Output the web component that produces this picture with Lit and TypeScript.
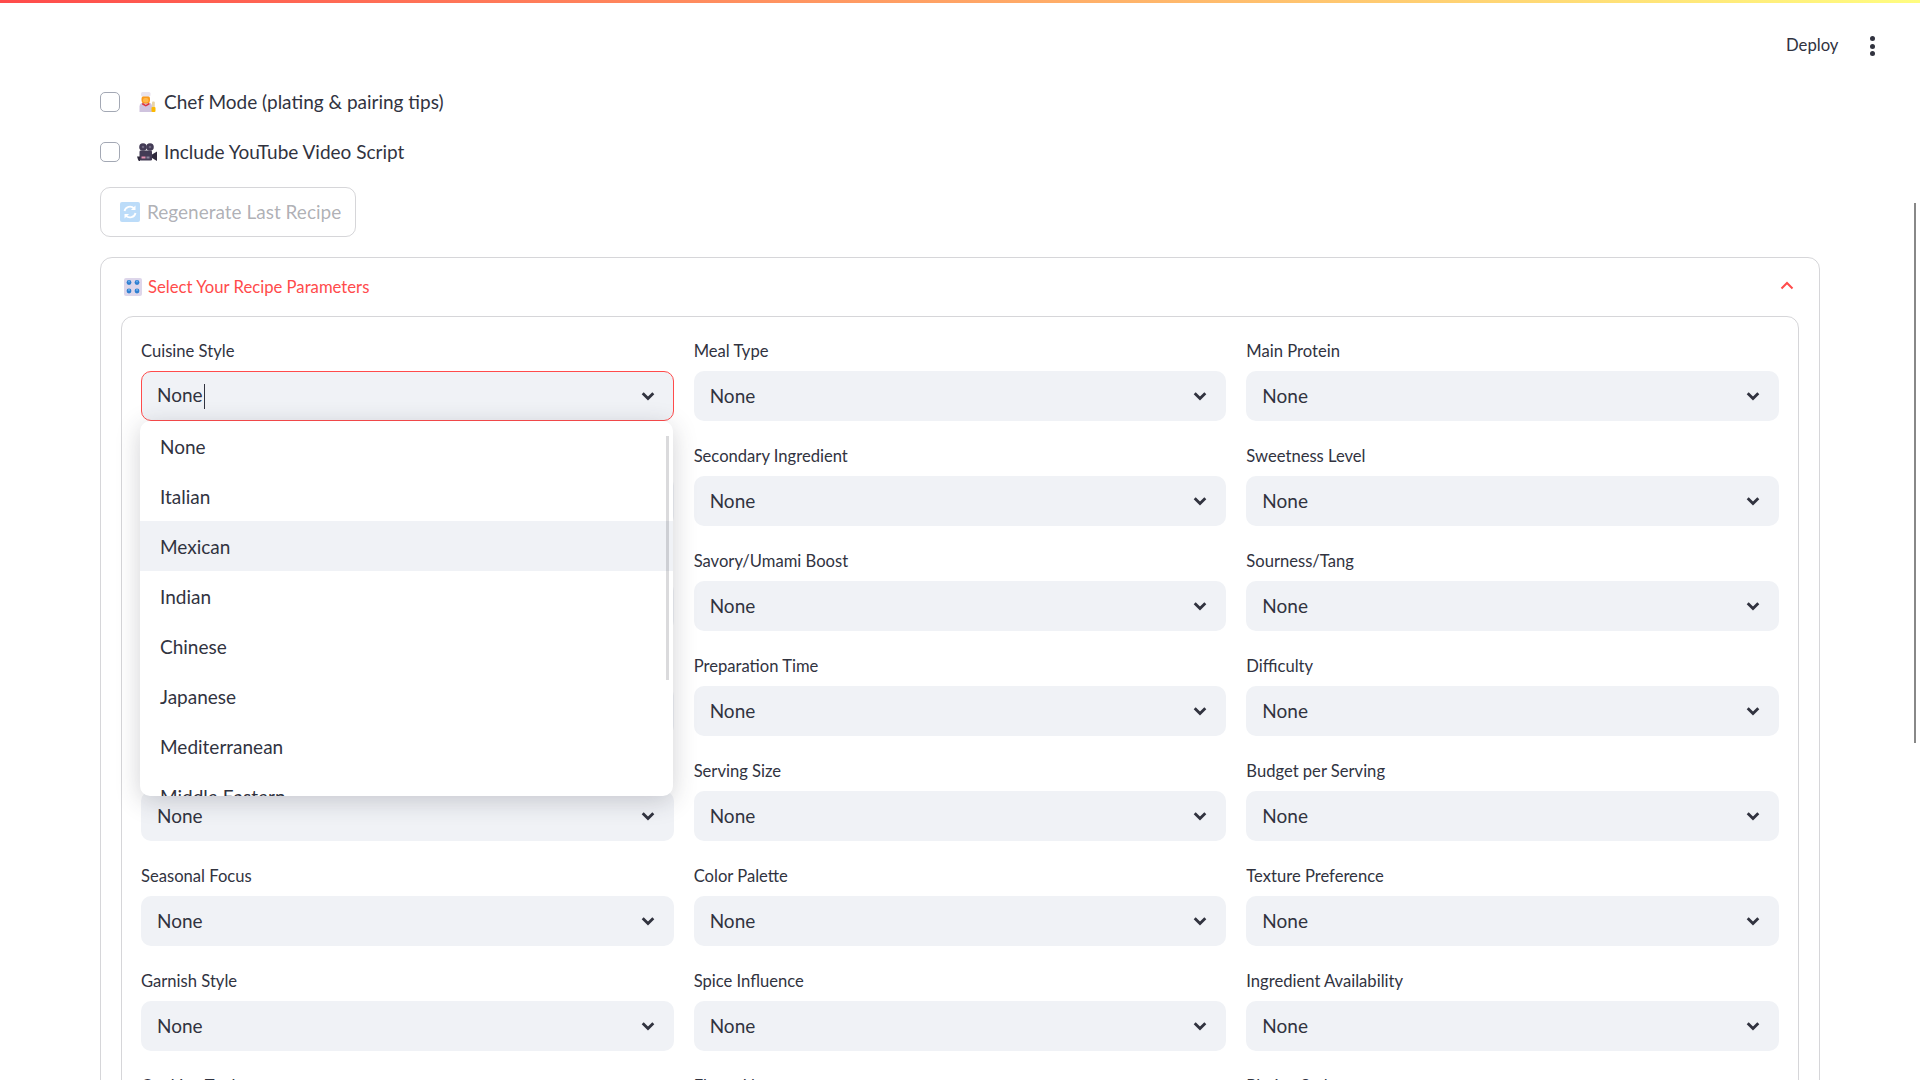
import { LitElement, html, css, svg } from 'lit';
import { customElement } from 'lit/decorators.js';

const chef = html`<svg width="20" height="20" viewBox="0 0 20 20">
  <path d="M2.500 20v-5.500C2.500 12 4.500 10.500 7 10.500h4c2.500 0 4 1.500 4 4V20z" fill="#cfc3de"/>
  <path d="M5.500 10.500L8.800 13l3.300-2.500.5 2-3.800 2-3.800-2z" fill="#e0323c"/>
  <rect x="4.500" y="3.500" width="8.500" height="8" rx="3.500" fill="#f99a1c"/>
  <rect x="6" y="6" width="5.500" height="4.500" rx="2" fill="#ffb84d"/>
  <rect x="4" y="0" width="9.500" height="4.500" rx="1.500" fill="#e9e3ee"/>
  <rect x="15" y="9.500" width="2.800" height="6" rx="1" fill="#e9d3a6"/>
  <rect x="14.500" y="15" width="4" height="5" rx="1" fill="#fcb900"/>
</svg>`;

const camera = html`<svg width="20" height="20" viewBox="0 0 20 20">
  <circle cx="6" cy="5" r="3.800" fill="#433b55"/>
  <circle cx="13" cy="5" r="3.800" fill="#433b55"/>
  <circle cx="6" cy="5" r="1.300" fill="#6f6780"/>
  <circle cx="13" cy="5" r="1.300" fill="#6f6780"/>
  <rect x="2.500" y="8.500" width="12.500" height="10" rx="1.200" fill="#433b55"/>
  <path d="M15 12.500l5-3V19l-5-3z" fill="#2f2a3d"/>
  <path d="M0 14.500h3V19H1.800L1 17.500z" fill="#2f2a3d"/>
  <rect x="4.500" y="14.500" width="4" height="2" fill="#e58fb0"/>
  <rect x="9.500" y="14.500" width="3" height="2" fill="#8c849c"/>
</svg>`;

const refresh = html`<svg width="20" height="20" viewBox="0 0 20 20" style="opacity:.4">
  <rect width="20" height="20" rx="2" fill="#5aa9f2"/>
  <path d="M4.500 9a5.600 5.600 0 0 1 9.600-2.600M15.500 11a5.600 5.600 0 0 1-9.600 2.600" fill="none" stroke="#fff" stroke-width="1.800"/>
  <path d="M15.500 3.500v4.600h-4.600zM4.500 16.500v-4.600h4.600z" fill="#fff"/>
</svg>`;

const knobs = html`<svg width="18" height="18" viewBox="0 0 18 18">
  <rect width="18" height="18" rx="2" fill="#ddd6ea"/>
  ${[[5, 4.500], [13, 4.500], [5, 13], [13, 13]].map(([x, y]) => svg`
    <circle cx=${x} cy=${y} r="2.400" fill="#2f7fd0"/>
    <circle cx=${x} cy=${y - 1} r="0.900" fill="#6db3f2"/>`)}
</svg>`;

const chevronDown = html`<svg class="chev" width="20" height="20" viewBox="0 0 20 20">
  <path d="M4.700 7.300l5.300 5.300 5.300-5.300" fill="none" stroke="#31333f" stroke-width="2.800"/>
</svg>`;

const selects = [
  ['Cuisine Style', 'Meal Type', 'Main Protein'],
  ['Vegetable Focus', 'Secondary Ingredient', 'Sweetness Level'],
  ['Cooking Method', 'Savory/Umami Boost', 'Sourness/Tang'],
  ['Dietary Restriction', 'Preparation Time', 'Difficulty'],
  ['Spice Level', 'Serving Size', 'Budget per Serving'],
  ['Seasonal Focus', 'Color Palette', 'Texture Preference'],
  ['Garnish Style', 'Spice Influence', 'Ingredient Availability'],
  ['Cooking Tools', 'Flavor Notes', 'Plating Style'],
];

const options = ['None', 'Italian', 'Mexican', 'Indian', 'Chinese', 'Japanese', 'Mediterranean', 'Middle Eastern'];

@customElement('app-root')
export class AppRoot extends LitElement {
  static styles = css`
    :host {
      display: block;
      height: 1080px;
      overflow: hidden;
      position: relative;
      background: #fff;
      color: #31333f;
      font-family: 'Lato', sans-serif;
      font-size: 19px;
    }

    .decoration {
      height: 3px;
      background: linear-gradient(90deg, #ff4b4b, #fffd80);
    }

    .toolbar {
      height: 89px;
      box-sizing: border-box;
      padding: 31px 0 0 1786px;
      display: flex;
      align-items: flex-start;
      gap: 32px;
      font-size: 16.700px;
      line-height: 22px;
    }

    .dots {
      display: flex;
      flex-direction: column;
      gap: 2.500px;
      padding-top: 2px;
    }

    .dots i {
      width: 5px;
      height: 5px;
      border-radius: 50%;
      background: #31333f;
    }

    .main {
      margin-left: 100px;
      width: 1720px;
    }

    .check {
      height: 20px;
      display: flex;
      align-items: center;
      margin-bottom: 30px;
      line-height: 18px;
    }

    .box {
      width: 20px;
      height: 20px;
      box-sizing: border-box;
      border: 1px solid #a3a8b4;
      border-radius: 5px;
      margin-right: 17px;
    }

    .check svg {
      margin-right: 7px;
    }

    .regen {
      width: 256px;
      height: 50px;
      box-sizing: border-box;
      border: 1px solid rgba(49, 51, 63, 0.2);
      border-radius: 10px;
      display: flex;
      align-items: center;
      padding: 0 0 2px 19px;
      gap: 7px;
      color: rgba(49, 51, 63, 0.4);
      margin-top: -5px;
    }

    .regen svg {
      margin-top: 2px;
    }

    .expander {
      margin-top: 20px;
      border: 1px solid rgba(49, 51, 63, 0.2);
      border-radius: 12px;
      padding: 0 20px;
    }

    .exp-head {
      height: 58px;
      box-sizing: border-box;
      padding: 0 0 1px 3px;
      display: flex;
      align-items: center;
      color: #ff4b4b;
      font-size: 16.700px;
      gap: 6px;
    }

    .exp-head .up {
      margin: 0 4px 1px auto;
    }

    .inner {
      border: 1px solid rgba(49, 51, 63, 0.2);
      border-radius: 12px;
      padding: 19px 19px 20px;
      display: grid;
      grid-template-columns: repeat(3, 1fr);
      column-gap: 20px;
      row-gap: 20px;
      position: relative;
    }

    label {
      display: block;
      box-sizing: border-box;
      font-size: 16.600px;
      line-height: 22px;
      height: 35px;
      padding-top: 4px;
    }

    .select {
      height: 50px;
      box-sizing: border-box;
      background: #f0f2f6;
      border-radius: 10px;
      display: flex;
      align-items: center;
      justify-content: space-between;
      padding: 0 16px;
    }

    .select > span {
      margin-top: -1px;
    }

    .select.open {
      border: 1px solid #ff4b4b;
      padding: 0 15px;
    }

    .select.open > span {
      margin-top: 0;
    }

    .caret {
      display: inline-block;
      width: 1px;
      height: 25px;
      background: #31333f;
      vertical-align: middle;
      margin-left: 1px;
    }

    .menu {
      position: absolute;
      left: 18px;
      top: 104px;
      width: 533px;
      height: 375px;
      overflow: hidden;
      background: #fff;
      border-radius: 10px;
      box-shadow: 0 5px 25px rgba(49, 51, 63, 0.22);
    }

    .opt {
      height: 50px;
      line-height: 52px;
      padding-left: 20px;
    }

    .opt.hover {
      background: #f0f2f6;
    }

    .thumb {
      position: absolute;
      right: 4px;
      top: 15px;
      width: 3px;
      height: 244px;
      background: rgba(49, 51, 63, 0.18);
    }

    .page-scroll {
      position: absolute;
      left: 1914px;
      top: 203px;
      width: 2px;
      height: 540px;
      background: #888;
    }
  `;

  render() {
    return html`
      <div class="decoration"></div>
      <div class="toolbar">
        <span>Deploy</span>
        <span class="dots"><i></i><i></i><i></i></span>
      </div>
      <div class="main">
        <div class="check"><span class="box"></span>${chef}Chef Mode (plating &amp; pairing tips)</div>
        <div class="check"><span class="box"></span>${camera}Include YouTube Video Script</div>
        <div class="regen">${refresh}Regenerate Last Recipe</div>
        <div class="expander">
          <div class="exp-head">
            ${knobs}Select Your Recipe Parameters
            <svg class="up" width="16" height="16" viewBox="0 0 16 16">
              <path d="M2.500 10.500L8 5l5.500 5.500" fill="none" stroke="#ff4b4b" stroke-width="2"/>
            </svg>
          </div>
          <div class="inner">
            ${selects.flat().map((name, i) => html`
              <div>
                <label>${name}</label>
                <div class="select ${i === 0 ? 'open' : ''}">
                  <span>None${i === 0 ? html`<span class="caret"></span>` : ''}</span>
                  ${chevronDown}
                </div>
              </div>`)}
            <div class="menu">
              ${options.map((o, i) => html`<div class="opt ${i === 2 ? 'hover' : ''}">${o}</div>`)}
              <div class="thumb"></div>
            </div>
          </div>
        </div>
      </div>
      <div class="page-scroll"></div>
    `;
  }
}
